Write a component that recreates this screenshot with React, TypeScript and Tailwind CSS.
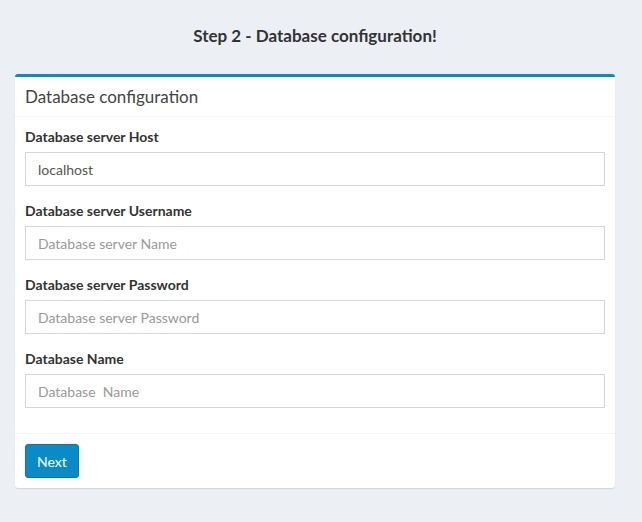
const FIELDS = [
  { label: 'Database server Host', value: 'localhost', placeholder: '' },
  { label: 'Database server Username', value: '', placeholder: 'Database server Name' },
  { label: 'Database server Password', value: '', placeholder: 'Database server Password' },
  { label: 'Database Name', value: '', placeholder: 'Database  Name' },
];

export default function App() {
  return (
    <div className="min-h-[522px] bg-[#ecf0f5] text-[#333] font-['Lato',sans-serif]">
      <div className="w-[600px] ml-[15px] pt-[24px]">
        <h4 className="text-center text-[17px] leading-[24px] font-bold mb-[26px]">
          Step 2 - Database configuration!
        </h4>

        <div className="bg-white border-t-[3px] border-[#0a8ac6] rounded-[3px] shadow-[0_1px_1px_rgba(0,0,0,0.12)]">
          <div className="px-[10px] py-[10px] border-b border-[#f4f4f4]">
            <h3 className="text-[17px] leading-[19px] text-[#444]">Database configuration</h3>
          </div>

          <div className="p-[10px]">
            {FIELDS.map(f => (
              <div key={f.label} className="mb-[15px]">
                <label className="block text-[14px] leading-[20px] font-bold mb-[5px]">{f.label}</label>
                <input
                  className="block w-full h-[34px] px-[12px] text-[14px] text-[#555] border border-[#d2d6de] outline-none placeholder:text-[#999]"
                  defaultValue={f.value}
                  placeholder={f.placeholder}
                />
              </div>
            ))}
          </div>

          <div className="p-[10px] border-t border-[#f4f4f4]">
            <button className="h-[34px] px-[11px] text-[14px] text-white bg-[#0a8ac6] border border-[#0779ae] rounded-[3px]">
              Next
            </button>
          </div>
        </div>
      </div>
    </div>
  );
}
